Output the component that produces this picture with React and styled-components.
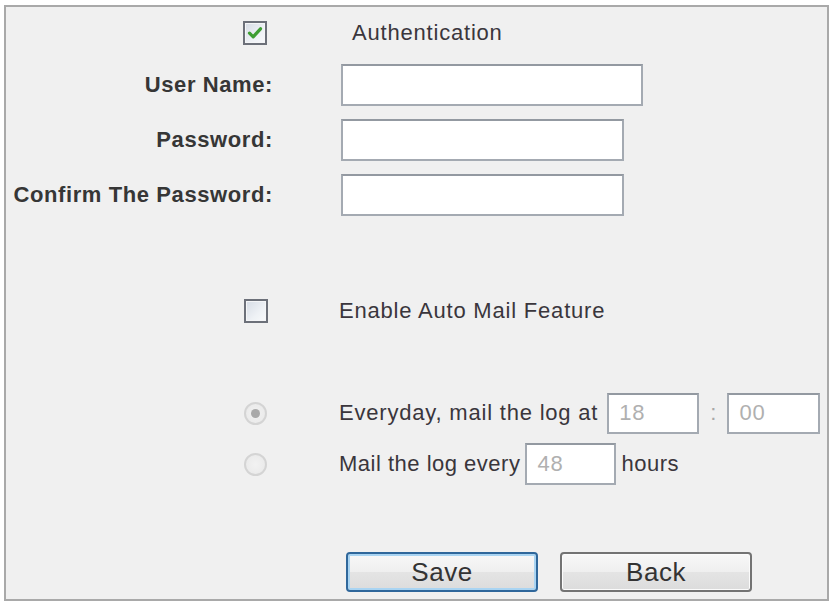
import React from "react";
import styled, { createGlobalStyle } from "styled-components";

const Global = createGlobalStyle`
  html, body { margin: 0; padding: 0; background: #ffffff; }
  body { font-family: "Liberation Sans", Arial, sans-serif; }
  * { box-sizing: border-box; }
`;

const Frame = styled.div`
  margin: 5px 0 0 4px;
  width: 825px;
  height: 596px;
  border: 2px solid #a9a9a9;
  background: #f0f0f0;
  padding-top: 13px;
  display: flex;
  flex-direction: column;
`;

const Row = styled.div`
  display: grid;
  grid-template-columns: 267px 1fr;
  column-gap: 66px;
  align-items: center;
  height: ${(p) => p.$h}px;
  margin-top: ${(p) => p.$mt || 0}px;
`;

const Label = styled.div`
  justify-self: end;
  font-weight: bold;
  font-size: 22px;
  letter-spacing: 0.6px;
  color: #363636;
  white-space: nowrap;
`;

const Cell = styled.div`
  display: flex;
  align-items: center;
  gap: ${(p) => p.$gap || 0}px;
  padding-left: ${(p) => p.$pl || 0}px;
`;

const Text = styled.span`
  font-size: 22px;
  letter-spacing: ${(p) => p.$ls ?? 0.8}px;
  color: #3a363c;
  white-space: nowrap;
`;

const Colon = styled.span`
  font-size: 22px;
  color: #a8a8a8;
  margin: 0 11px;
`;

const Input = styled.div`
  width: ${(p) => p.$w}px;
  height: ${(p) => p.$hh || 42}px;
  margin-left: ${(p) => p.$ml || 0}px;
  background: #ffffff;
  border: 2px solid #a4aab2;
  border-top-color: #9399a1;
  font-size: 22px;
  letter-spacing: 0.8px;
  color: #b0b0b0;
  display: flex;
  align-items: center;
  padding-left: 10px;
`;

const BoxCell = styled.div`
  justify-self: end;
  margin-right: ${(p) => p.$mr || 5}px;
  display: flex;
`;

const CheckBox = styled.span`
  width: 24px;
  height: 24px;
  border: 2px solid #6c7079;
  background: linear-gradient(135deg, #d6dce5 0%, #eef1f5 60%, #f8f9fb 100%);
  box-shadow: inset 0 0 0 1px #f4f5f7;
  display: flex;
  align-items: center;
  justify-content: center;
`;

const Radio = styled.span`
  width: 23px;
  height: 23px;
  border-radius: 50%;
  border: 2px solid #d4d4d4;
  background: radial-gradient(circle, #f2f2f2 0%, #e8e8e8 100%);
  display: flex;
  align-items: center;
  justify-content: center;
`;

const Dot = styled.span`
  width: 9px;
  height: 9px;
  border-radius: 50%;
  background: #a9a9a9;
`;

const Button = styled.button`
  width: 192px;
  height: 40px;
  font-family: "Liberation Sans", Arial, sans-serif;
  font-size: 26px;
  letter-spacing: 0.5px;
  color: #333333;
  border-radius: 4px;
  border: 2px solid ${(p) => (p.$primary ? "#2f679b" : "#737373")};
  box-shadow: inset 0 0 0 ${(p) => (p.$primary ? "2px #a9d4f2" : "1px #fbfbfb")};
  background: linear-gradient(#f8f8f8 0%, #efefef 50%, #e4e4e4 51%, #dcdcdc 100%);
  padding: 0;
  padding-top: 1px;
`;

const Buttons = styled.div`
  display: flex;
  gap: 22px;
  padding-left: 7px;
`;

export default function App() {
  return (
    <>
      <Global />
      <Frame>
        <Row $h={26}>
          <BoxCell $mr={6}>
            <CheckBox>
              <svg width="16" height="14" viewBox="0 0 16 14">
                <path d="M2.5 7.2 L6.2 10.8 L13.5 2.8" fill="none" stroke="#3e9e33" strokeWidth="3.2" strokeLinecap="round" strokeLinejoin="round" />
              </svg>
            </CheckBox>
          </BoxCell>
          <Cell $pl={13}>
            <Text>Authentication</Text>
          </Cell>
        </Row>

        <Row $h={42} $mt={18}>
          <Label>User Name:</Label>
          <Cell>
            <Input $w={302} $ml={2} />
          </Cell>
        </Row>

        <Row $h={42} $mt={13}>
          <Label>Password:</Label>
          <Cell>
            <Input $w={283} $ml={2} />
          </Cell>
        </Row>

        <Row $h={42} $mt={13}>
          <Label>Confirm The Password:</Label>
          <Cell>
            <Input $w={283} $ml={2} />
          </Cell>
        </Row>

        <Row $h={26} $mt={82}>
          <BoxCell $mr={5}>
            <CheckBox />
          </BoxCell>
          <Cell>
            <Text>Enable Auto Mail Feature</Text>
          </Cell>
        </Row>

        <Row $h={42} $mt={68}>
          <BoxCell $mr={6}>
            <Radio>
              <Dot />
            </Radio>
          </BoxCell>
          <Cell>
            <Text>Everyday, mail the log at</Text>
            <Input $w={92} $hh={41} $ml={9}>18</Input>
            <Colon>:</Colon>
            <Input $w={93} $hh={41}>00</Input>
          </Cell>
        </Row>

        <Row $h={42} $mt={9}>
          <BoxCell $mr={6}>
            <Radio />
          </BoxCell>
          <Cell $gap={5}>
            <Text $ls={0.5}>Mail the log every</Text>
            <Input $w={91}>48</Input>
            <Text $ls={0.5}>hours</Text>
          </Cell>
        </Row>

        <Row $h={40} $mt={67}>
          <div />
          <Buttons>
            <Button $primary>Save</Button>
            <Button>Back</Button>
          </Buttons>
        </Row>
      </Frame>
    </>
  );
}
